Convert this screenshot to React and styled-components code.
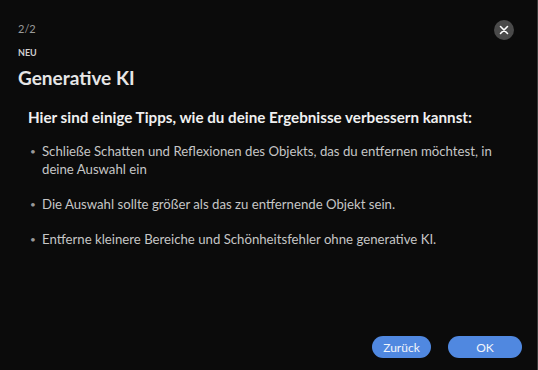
import React from "react";
import styled, { createGlobalStyle } from "styled-components";

const tips = [
  "Schließe Schatten und Reflexionen des Objekts, das du entfernen möchtest, in deine Auswahl ein",
  "Die Auswahl sollte größer als das zu entfernende Objekt sein.",
  "Entferne kleinere Bereiche und Schönheitsfehler ohne generative KI.",
];

const App = () => {
  return (
    <>
      <GlobalStyle />
      <Dialog>
        <CloseButton aria-label="Schließen">
          <svg width="10" height="10" viewBox="0 0 10 10">
            <path d="M1.5 1.5 L8.5 8.5 M8.5 1.5 L1.5 8.5" stroke="#fff" strokeWidth="1.6" strokeLinecap="round" />
          </svg>
        </CloseButton>
        <Step>2/2</Step>
        <Badge>NEU</Badge>
        <Title>Generative KI</Title>
        <Content>
          <Heading>Hier sind einige Tipps, wie du deine Ergebnisse verbessern kannst:</Heading>
          <TipList>
            {tips.map((tip) => (
              <Tip key={tip}>{tip}</Tip>
            ))}
          </TipList>
        </Content>
        <Footer>
          <Button>Zurück</Button>
          <Button wide>OK</Button>
        </Footer>
      </Dialog>
    </>
  );
};

export default App;

const GlobalStyle = createGlobalStyle`
  html, body {
    margin: 0;
    background: #0b0b0b;
  }
`;

const Dialog = styled.div`
  position: relative;
  box-sizing: border-box;
  width: 538px;
  height: 370px;
  padding: 22px 15px 12px 18px;
  background: #0b0b0b;
  border-right: 1px solid #3a3a3a;
  font-family: "Lato", "Noto Sans", sans-serif;
  display: flex;
  flex-direction: column;
`;

const CloseButton = styled.button`
  position: absolute;
  top: 20px;
  right: 23px;
  width: 20px;
  height: 20px;
  padding: 0;
  border: none;
  border-radius: 50%;
  background: #4a4a4a;
  display: flex;
  align-items: center;
  justify-content: center;
  cursor: pointer;
`;

const Step = styled.div`
  font-size: 11px;
  line-height: 14px;
  color: #9a9a9a;
`;

const Badge = styled.div`
  margin-top: 11px;
  font-size: 9px;
  line-height: 12px;
  font-weight: 700;
  color: #d0d0d0;
`;

const Title = styled.h1`
  margin: 7px 0 0 0;
  font-size: 19px;
  line-height: 24px;
  font-weight: 700;
  color: #e6e6e6;
`;

const Content = styled.div`
  padding: 0 30px 0 10px;
  flex: 1;
`;

const Heading = styled.h2`
  margin: 18px 0 0 0;
  font-size: 15.2px;
  line-height: 18px;
  font-weight: 700;
  color: #f0f0f0;
  white-space: nowrap;
`;

const TipList = styled.ul`
  margin: 16px 0 0 0;
  padding: 0 0 0 14px;
  list-style: none;
  display: flex;
  flex-direction: column;
  gap: 17px;
`;

const Tip = styled.li`
  position: relative;
  font-size: 13.2px;
  line-height: 18px;
  color: #c6c6c6;

  &::before {
    content: "•";
    position: absolute;
    left: -12px;
    color: #9a9a9a;
    font-size: 10px;
  }
`;

const Footer = styled.div`
  display: flex;
  justify-content: flex-end;
  gap: 17px;
`;

const Button = styled.button`
  width: ${(p) => (p.wide ? "74px" : "59px")};
  height: 22px;
  padding: 0;
  border: none;
  border-radius: 11px;
  background: #5088e0;
  color: #f2f5fb;
  font-family: "Lato", "Noto Sans", sans-serif;
  font-size: 12px;
  cursor: pointer;
`;
